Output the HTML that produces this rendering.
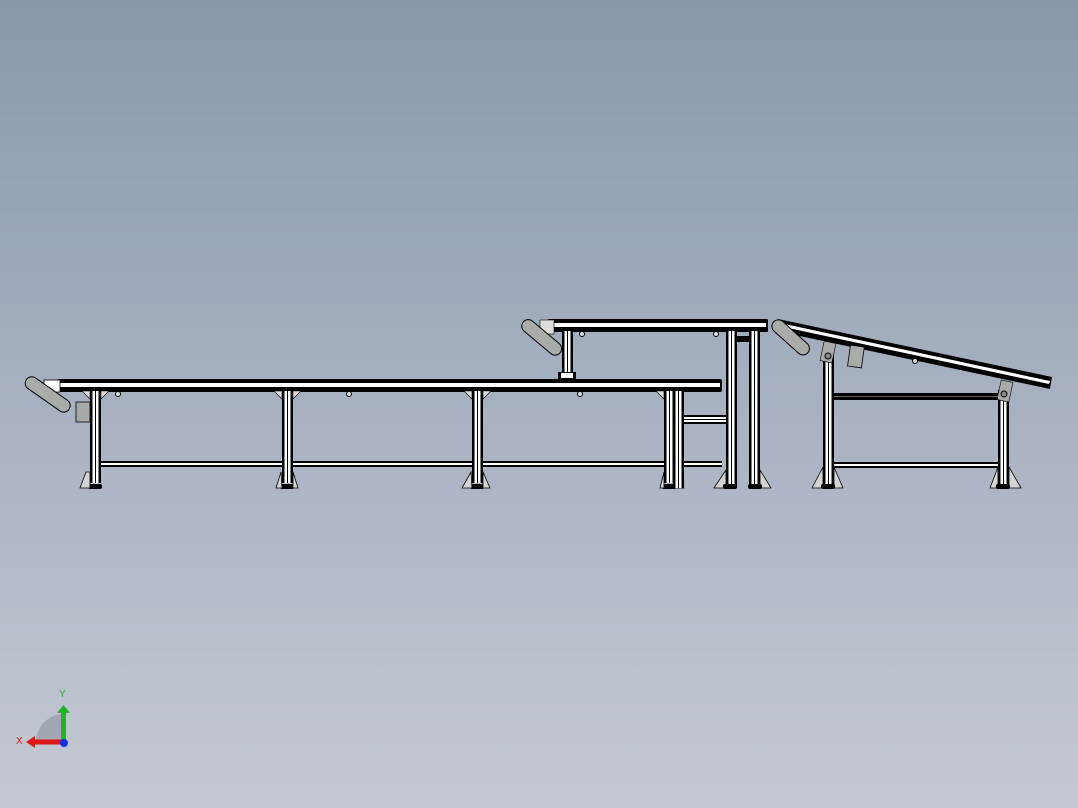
<!DOCTYPE html>
<html><head><style>
html,body{margin:0;padding:0}
body{width:1078px;height:808px;overflow:hidden;background:linear-gradient(#8898ab 0%,#a4afbf 45%,#c5c9d3 100%)}
svg{position:absolute;left:0;top:0}
</style></head><body>
<svg width="1078" height="808" viewBox="0 0 1078 808" xmlns="http://www.w3.org/2000/svg">
<defs>
<g id="leg"><rect x="0" y="0" width="11" height="100" fill="#000"/><rect x="2.5" y="0" width="2.5" height="100" fill="#fff"/><rect x="6" y="0" width="2.5" height="100" fill="#fff"/></g>
<g id="gus"><polygon points="-8,0 0,0 0,8" fill="#ddd" stroke="#000" stroke-width="0.6"/><polygon points="11,0 19,0 11,8" fill="#ddd" stroke="#000" stroke-width="0.6"/></g>
</defs>
<!-- long conveyor -->
<rect x="57" y="379" width="665" height="13" fill="#000" rx="2"/>
<rect x="59" y="383" width="661" height="4" fill="#fff"/>
<rect x="100" y="461" width="622" height="6" fill="#000"/>
<rect x="100" y="463" width="622" height="2" fill="#fff"/>
<g transform="translate(90,391) scale(1,0.92)"><use href="#leg"/></g>
<g transform="translate(282,391) scale(1,0.92)"><use href="#leg"/></g>
<g transform="translate(472,391) scale(1,0.92)"><use href="#leg"/></g>
<g transform="translate(664,391) scale(1,0.92)"><use href="#leg"/></g>
<g transform="translate(90,391)"><use href="#gus"/></g>
<g transform="translate(282,391)"><use href="#gus"/></g>
<g transform="translate(472,391)"><use href="#gus"/></g>
<g transform="translate(664,391)"><use href="#gus"/></g>
<rect x="88" y="484" width="14" height="5" rx="2" fill="#000"/>
<polygon points="80,488 86,472 90,472 90,488" fill="#d4d4d4" stroke="#000" stroke-width=".8"/>
<rect x="280" y="484" width="14" height="5" rx="2" fill="#000"/>
<polygon points="276,488 281,472 282,488" fill="#d4d4d4" stroke="#000" stroke-width=".8"/>
<polygon points="298,488 293,472 293,488" fill="#d4d4d4" stroke="#000" stroke-width=".8"/>
<rect x="470" y="484" width="14" height="5" rx="2" fill="#000"/>
<polygon points="462,488 471,472 472,488" fill="#d4d4d4" stroke="#000" stroke-width=".8"/>
<polygon points="490,488 483,472 483,488" fill="#d4d4d4" stroke="#000" stroke-width=".8"/>
<rect x="662" y="484" width="14" height="5" rx="2" fill="#000"/>
<polygon points="660,488 664,472 664,488" fill="#d4d4d4" stroke="#000" stroke-width=".8"/>
<polygon points="684,488 675,472 675,488" fill="#d4d4d4" stroke="#000" stroke-width=".8"/>
<rect x="76" y="402" width="14" height="20" fill="#a7a9a9" stroke="#000" stroke-width=".8"/>
<rect x="44" y="380" width="16" height="12" fill="#fff" stroke="#000" stroke-width=".8"/>
<rect x="22" y="388" width="52" height="13" rx="6.5" transform="rotate(35 48 394)" fill="#a9aca9" stroke="#000"/>
<circle cx="118" cy="394" r="2.5" fill="#ddd" stroke="#000"/>
<circle cx="349" cy="394" r="2.5" fill="#ddd" stroke="#000"/>
<circle cx="580" cy="394" r="2.5" fill="#ddd" stroke="#000"/>
<!-- upper conveyor -->
<rect x="548" y="319" width="220" height="13" fill="#000" rx="1"/>
<rect x="552" y="323" width="214" height="4" fill="#fff"/>
<rect x="540" y="320" width="14" height="14" fill="#ddd" stroke="#000" stroke-width=".6"/>
<rect x="518" y="331" width="48" height="13" rx="6.5" transform="rotate(40 542 337)" fill="#a9aca9" stroke="#000"/>
<g transform="translate(562,331) scale(1,0.49)"><use href="#leg"/></g>
<rect x="558" y="372" width="18" height="8" fill="#000"/><rect x="561" y="373" width="12" height="5" fill="#fff"/>
<g transform="translate(726,331) scale(1,1.57)"><use href="#leg"/></g>
<g transform="translate(749,331) scale(1,1.57)"><use href="#leg"/></g>
<rect x="675" y="415" width="51" height="9" fill="#000"/><rect x="675" y="417" width="51" height="5" fill="#fff"/><rect x="675" y="419" width="51" height="1" fill="#000"/>
<g transform="translate(673,391) scale(1,0.97)"><use href="#leg"/></g>
<rect x="737" y="336" width="12" height="6" fill="#000"/>
<polygon points="714,488 726,470 726,488" fill="#d4d4d4" stroke="#000" stroke-width=".8"/>
<polygon points="771,488 760,470 760,488" fill="#d4d4d4" stroke="#000" stroke-width=".8"/>
<rect x="723" y="484" width="14" height="5" rx="2" fill="#000"/>
<rect x="748" y="484" width="14" height="5" rx="2" fill="#000"/>
<circle cx="582" cy="334" r="2.5" fill="#ddd" stroke="#000"/>
<circle cx="716" cy="334" r="2.5" fill="#ddd" stroke="#000"/>
<!-- incline conveyor -->
<polygon points="778,319 1052,377 1050,389 776,331" fill="#000"/>
<polygon points="780,323 1050,381 1049,384 779,326" fill="#fff"/>
<rect x="768" y="331" width="46" height="13" rx="6.5" transform="rotate(42 791 337)" fill="#a9aca9" stroke="#000"/>
<g transform="translate(823,350) scale(1,1.36)"><use href="#leg"/></g>
<g transform="translate(998,390) scale(1,0.96)"><use href="#leg"/></g>
<rect x="822" y="342" width="12" height="20" fill="#aaa" stroke="#000" stroke-width=".6" transform="rotate(12 828 352)"/>
<circle cx="828" cy="356" r="3" fill="#888" stroke="#000"/>
<rect x="999" y="381" width="12" height="20" fill="#aaa" stroke="#000" stroke-width=".6" transform="rotate(12 1005 391)"/>
<circle cx="1004" cy="394" r="3" fill="#888" stroke="#000"/>
<rect x="849" y="346" width="14" height="21" fill="#a9aca9" stroke="#000" stroke-width=".8" transform="rotate(8 856 356)"/>
<rect x="834" y="393" width="164" height="7" fill="#000"/><rect x="834" y="396" width="164" height="1" fill="#666"/>
<rect x="834" y="462" width="164" height="6" fill="#000"/><rect x="834" y="464" width="164" height="2" fill="#fff"/>
<polygon points="812,488 823,467 823,488" fill="#d4d4d4" stroke="#000" stroke-width=".8"/>
<polygon points="843,488 834,467 834,488" fill="#d4d4d4" stroke="#000" stroke-width=".8"/>
<polygon points="990,488 998,467 998,488" fill="#d4d4d4" stroke="#000" stroke-width=".8"/>
<polygon points="1021,488 1009,467 1009,488" fill="#d4d4d4" stroke="#000" stroke-width=".8"/>
<rect x="821" y="484" width="14" height="5" rx="2" fill="#000"/>
<rect x="996" y="484" width="14" height="5" rx="2" fill="#000"/>
<circle cx="915" cy="361" r="2.5" fill="#ddd" stroke="#000"/>
<!-- triad -->
<path d="M36 742 A28 28 0 0 1 64 714 L64 742 Z" fill="#9aa0a8" opacity=".8"/>
<rect x="61" y="712" width="5" height="30" fill="#1fb51f"/>
<polygon points="57,713 63.5,705 70,713" fill="#1fb51f"/>
<rect x="34" y="739.5" width="28" height="5" fill="#e01515"/>
<polygon points="35,736 26,742 35,748" fill="#e01515"/>
<circle cx="64" cy="743" r="4" fill="#1530e0"/>
<text x="59" y="697" font-family="Liberation Sans,sans-serif" font-size="10" fill="#1fb51f">Y</text>
<text x="16" y="744" font-family="Liberation Sans,sans-serif" font-size="10" fill="#e01515">X</text>
</svg>
</body></html>
